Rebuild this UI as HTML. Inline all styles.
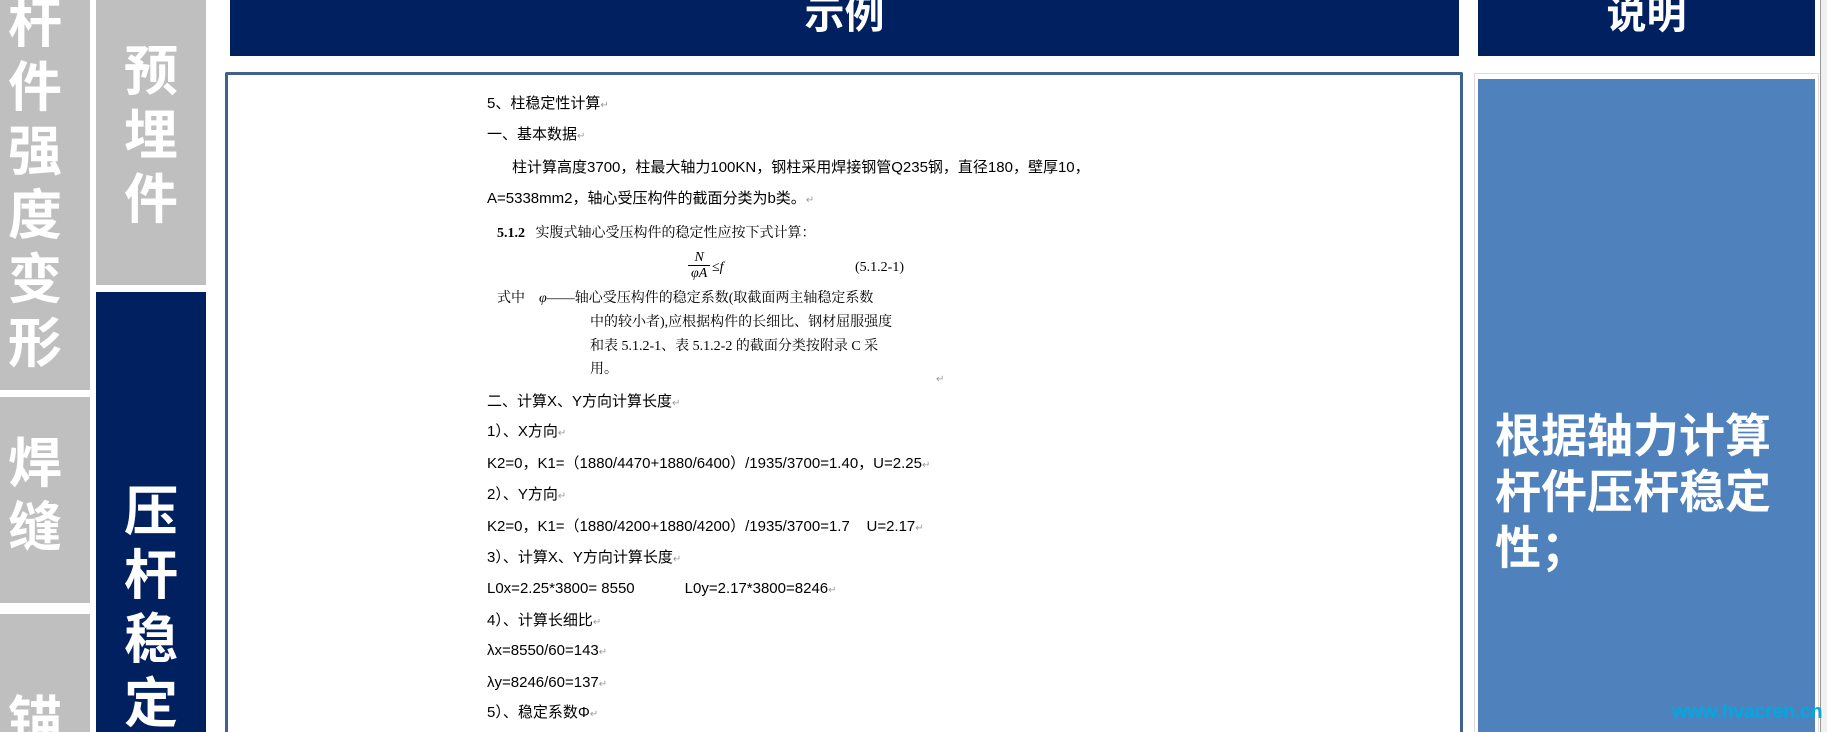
<!DOCTYPE html><html style="width:1827px;height:732px;overflow:hidden"><head><meta charset="utf-8"><style>
body{margin:0;width:1827px;height:732px;overflow:hidden;background:#fff;position:relative;font-family:"Liberation Sans","Noto Sans CJK SC",sans-serif}
.a{position:absolute}
.g{background:#bfbfbf;overflow:hidden}.n{background:#002060;overflow:hidden}
.vt{color:#fff;font-weight:bold;font-size:54px;line-height:64px;width:60px;text-align:center}
.t{position:absolute;left:487px;font-size:15px;color:#000;white-space:nowrap;line-height:18px}
.s{font-family:"Liberation Serif","Noto Serif CJK SC",serif;font-size:14px}
.m{color:#999;font-size:10px}
</style></head><body>
<div class="a g" style="left:0;top:0;width:90px;height:390px"><div class="a vt" style="left:5px;top:-8px">杆<br>件<br>强<br>度<br>变<br>形</div></div>
<div class="a g" style="left:0;top:397px;width:90px;height:206px"><div class="a vt" style="left:5px;top:35px">焊<br>缝</div></div>
<div class="a g" style="left:0;top:614px;width:90px;height:118px"><div class="a vt" style="left:5px;top:76px">锚</div></div>
<div class="a g" style="left:96px;top:0;width:110px;height:285px"><div class="a vt" style="left:25px;top:40px">预<br>埋<br>件</div></div>
<div class="a n" style="left:96px;top:292px;width:110px;height:440px"><div class="a vt" style="left:25px;top:188px">压<br>杆<br>稳<br>定</div></div>
<div class="a n" style="left:230px;top:0;width:1229px;height:56px;text-align:center;color:#fff;font-weight:bold;font-size:40px;line-height:30px">示例</div>
<div class="a n" style="left:1478px;top:0;width:337px;height:56px;text-align:center;color:#fff;font-weight:bold;font-size:40px;line-height:30px">说明</div>
<div class="a" style="left:225px;top:72px;width:1232px;height:657px;border:3px solid #41618f;border-bottom:none;border-radius:2px 2px 0 0"></div>
<div class="a" style="left:1474px;top:73px;width:345px;height:659px;border:1px solid #e8d8d8;border-bottom:none;box-sizing:border-box"></div>
<div class="a" style="left:1478px;top:79px;width:337px;height:653px;background:#4f81bd"></div>
<div class="a" style="left:1495px;top:408px;width:310px;color:#fff;font-weight:bold;font-size:46px;line-height:56px">根据轴力计算杆件压杆稳定性；</div>
<div class="a" style="left:1820px;top:0;width:6px;height:732px;background:#f0f0f0;border-left:1px solid #999"></div>
<div class="a" style="left:1672px;top:700px;color:#00a8e0;font-weight:bold;font-size:20px;line-height:24px;letter-spacing:-0.5px">www.hvacren.cn</div>

<div class="t" style="top:95px">5、柱稳定性计算<span class="m">↵</span></div>
<div class="t" style="top:126px">一、基本数据<span class="m">↵</span></div>
<div class="t" style="top:159px">&nbsp;&nbsp;&nbsp;&nbsp;&nbsp;&nbsp;柱计算高度3700，柱最大轴力100KN，钢柱采用焊接钢管Q235钢，直径180，壁厚10，</div>
<div class="t" style="top:190px">A=5338mm2，轴心受压构件的截面分类为b类。<span class="m">↵</span></div>
<div class="t s" style="top:225px;left:497px"><b>5.1.2</b>&nbsp;&nbsp;&nbsp;实腹式轴心受压构件的稳定性应按下式计算：</div>
<div class="t s" style="top:250px;left:688px;text-align:center;line-height:16px"><i>N</i><br><span style="border-top:1px solid #000;padding:0 3px"><i>φA</i></span></div>
<div class="t s" style="top:259px;left:712px"><i>≤f</i></div>
<div class="t s" style="top:259px;left:855px">(5.1.2-1)</div>
<div class="t s" style="top:290px;left:497px">式中&nbsp;&nbsp;&nbsp;&nbsp;<i>φ</i>——轴心受压构件的稳定系数(取截面两主轴稳定系数</div>
<div class="t s" style="top:314px;left:590px">中的较小者),应根据构件的长细比、钢材屈服强度</div>
<div class="t s" style="top:338px;left:590px">和表 5.1.2-1、表 5.1.2-2 的截面分类按附录 C 采</div>
<div class="t s" style="top:361px;left:590px">用。</div>
<div class="t m" style="top:371px;left:936px">↵</div>
<div class="t" style="top:393px">二、计算X、Y方向计算长度<span class="m">↵</span></div>
<div class="t" style="top:423px">1）、X方向<span class="m">↵</span></div>
<div class="t" style="top:455px">K2=0，K1=（1880/4470+1880/6400）/1935/3700=1.40，U=2.25<span class="m">↵</span></div>
<div class="t" style="top:486px">2）、Y方向<span class="m">↵</span></div>
<div class="t" style="top:518px">K2=0，K1=（1880/4200+1880/4200）/1935/3700=1.7&nbsp;&nbsp;&nbsp;&nbsp;U=2.17<span class="m">↵</span></div>
<div class="t" style="top:549px">3）、计算X、Y方向计算长度<span class="m">↵</span></div>
<div class="t" style="top:580px">L0x=2.25*3800= 8550&nbsp;&nbsp;&nbsp;&nbsp;&nbsp;&nbsp;&nbsp;&nbsp;&nbsp;&nbsp;&nbsp;&nbsp;L0y=2.17*3800=8246<span class="m">↵</span></div>
<div class="t" style="top:612px">4）、计算长细比<span class="m">↵</span></div>
<div class="t" style="top:642px">λx=8550/60=143<span class="m">↵</span></div>
<div class="t" style="top:674px">λy=8246/60=137<span class="m">↵</span></div>
<div class="t" style="top:704px">5）、稳定系数Φ<span class="m">↵</span></div>
</body></html>
